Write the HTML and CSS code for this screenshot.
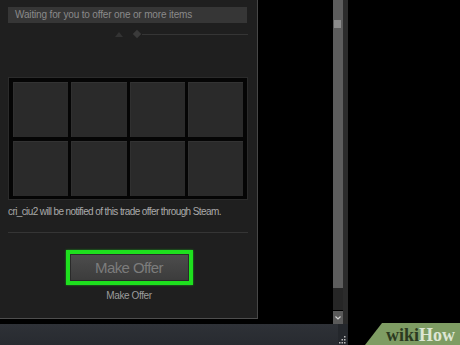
FILE: index.html
```html
<!DOCTYPE html>
<html>
<head>
<meta charset="utf-8">
<link rel="stylesheet" href="styles.css">
</head>
<body>
<div class="screen">
  <div class="top">
    <div class="panel">
      <div class="status">Waiting for you to offer one or more items</div>
      <div class="slider">
        <span class="tri"></span>
        <span class="knob"></span>
        <span class="line"></span>
      </div>
      <div class="frame">
        <div class="cell"></div><div class="cell"></div><div class="cell"></div><div class="cell"></div>
        <div class="cell"></div><div class="cell"></div><div class="cell"></div><div class="cell"></div>
      </div>
      <div class="notice">cri_ciu2 will be notified of this trade offer through Steam.</div>
      <div class="sep"></div>
      <div class="btn-wrap">
        <div class="highlight"><div class="btn">Make Offer</div></div>
      </div>
      <div class="caption">Make Offer</div>
    </div>
    <div class="gap"></div>
    <div class="scrollbar">
      <div class="track"><span class="thumb"></span></div>
      <div class="dark"></div>
      <div class="arrow"><svg width="6" height="4" viewBox="0 0 6 4"><path d="M0.5 0.5 L3 3 L5.5 0.5" fill="none" stroke="#d0d0d0" stroke-width="1.2"/></svg></div>
    </div>
    <div class="edge"></div>
  </div>
  <div class="bottom">
    <div class="strip"></div>
    <div class="grip"><svg width="9" height="10" viewBox="0 0 9 10"><g fill="#bbb"><rect x="6" y="1" width="1.5" height="1.5"/><rect x="3.5" y="4" width="1.5" height="1.5"/><rect x="6" y="4" width="1.5" height="1.5"/><rect x="1" y="7" width="1.5" height="1.5"/><rect x="3.5" y="7" width="1.5" height="1.5"/><rect x="6" y="7" width="1.5" height="1.5"/></g></svg></div>
  </div>
  <div class="wikihow"><span class="wiki">wiki</span><span class="how">How</span></div>
</div>
</body>
</html>
```
FILE: styles.css
```css
html, body {
  margin: 0;
  padding: 0;
  background: #000;
}
body {
  width: 460px;
  height: 345px;
  overflow: hidden;
  font-family: "Liberation Sans", Arial, sans-serif;
}
.screen {
  position: relative;
  width: 460px;
  height: 345px;
  display: flex;
  flex-direction: column;
}
.top {
  display: flex;
  height: 324px;
}
.panel {
  width: 257px;
  height: 318px;
  background: #1f1f1f;
  border-right: 1px solid #474747;
  border-bottom: 1px solid #4e4e4e;
  display: flex;
  flex-direction: column;
}
.status {
  margin: 7px 10px 0 8px;
  height: 16px;
  background: #363636;
  color: #8a8a8a;
  font-size: 10px;
  letter-spacing: -0.15px;
  line-height: 16px;
  padding-left: 7px;
  white-space: nowrap;
}
.slider {
  height: 10px;
  margin: 6px 9px 0 8px;
  display: flex;
  align-items: center;
}
.tri {
  margin-left: 107px;
  width: 0;
  height: 0;
  border-left: 4px solid transparent;
  border-right: 4px solid transparent;
  border-bottom: 5px solid #333;
}
.knob {
  margin-left: 11px;
  width: 6px;
  height: 6px;
  background: #3a3a3a;
  transform: rotate(45deg);
}
.line {
  flex: 1;
  height: 1px;
  background: #353535;
  margin-left: 2px;
}
.frame {
  margin: 39px 0 0 9px;
  width: 230px;
  padding: 4px 4px 3px 4px;
  background: #050505;
  outline: 1px solid #2b2b2b;
  display: grid;
  grid-template-columns: repeat(4, 1fr);
  grid-auto-rows: 55px;
  gap: 4px 3px;
}
.cell {
  background: #2a2a2a;
  border-top: 1px solid #333;
  border-left: 1px solid #303030;
}
.notice {
  margin: 7px 0 0 8px;
  color: #a9a9a9;
  font-size: 10px;
  letter-spacing: -0.6px;
  line-height: 12px;
  white-space: nowrap;
}
.sep {
  margin: 14px 9px 0 8px;
  height: 1px;
  background: #353535;
}
.btn-wrap {
  display: flex;
  justify-content: center;
  margin-top: 17px;
  padding-left: 1px;
}
.highlight {
  border: 4px solid #1ee01e;
  background: #1ee01e;
  box-shadow: 0 0 2px #1a9a1a;
}
.btn {
  width: 119px;
  height: 27px;
  box-sizing: border-box;
  border: 1px solid #2a2a2a;
  background: linear-gradient(#4c4c4c, #3c3c3c);
  color: #7c7c7c;
  font-size: 15px;
  letter-spacing: -0.6px;
  line-height: 25px;
  text-align: center;
}
.caption {
  margin-top: 5px;
  text-align: center;
  color: #9c9c9c;
  font-size: 10px;
  letter-spacing: -0.4px;
  padding-left: 1px;
}
.gap {
  width: 75px;
}
.scrollbar {
  width: 10px;
  display: flex;
  flex-direction: column;
}
.track {
  height: 288px;
  background: #5d5d5d;
  position: relative;
}
.thumb {
  position: absolute;
  left: 1px;
  top: 20px;
  width: 7px;
  height: 8px;
  background: #8c8c8c;
}
.dark {
  height: 22px;
  background: #262626;
}
.arrow {
  height: 13px;
  margin-top: 1px;
  background: #5a5a5a;
  display: flex;
  align-items: center;
  justify-content: center;
}
.edge {
  width: 5px;
  background: #2b2b2b;
  height: 325px;
}
.bottom {
  display: flex;
  height: 21px;
}
.strip {
  width: 338px;
  background: linear-gradient(#2e3137, #282b30);
}
.grip {
  width: 10px;
  background: #24272c;
  display: flex;
  align-items: flex-end;
}
.wikihow {
  position: absolute;
  right: 0;
  bottom: 0;
  width: 95px;
  height: 22px;
  background: #7e9c63;
  clip-path: polygon(17px 0, 100% 0, 100% 100%, 0 100%);
  box-sizing: border-box;
  padding-left: 21px;
  font-family: "Liberation Serif", "Times New Roman", serif;
  font-weight: bold;
  font-size: 18px;
  line-height: 24px;
}
.wiki {
  color: #2b3a20;
}
.how {
  color: #dde6d4;
}
```
